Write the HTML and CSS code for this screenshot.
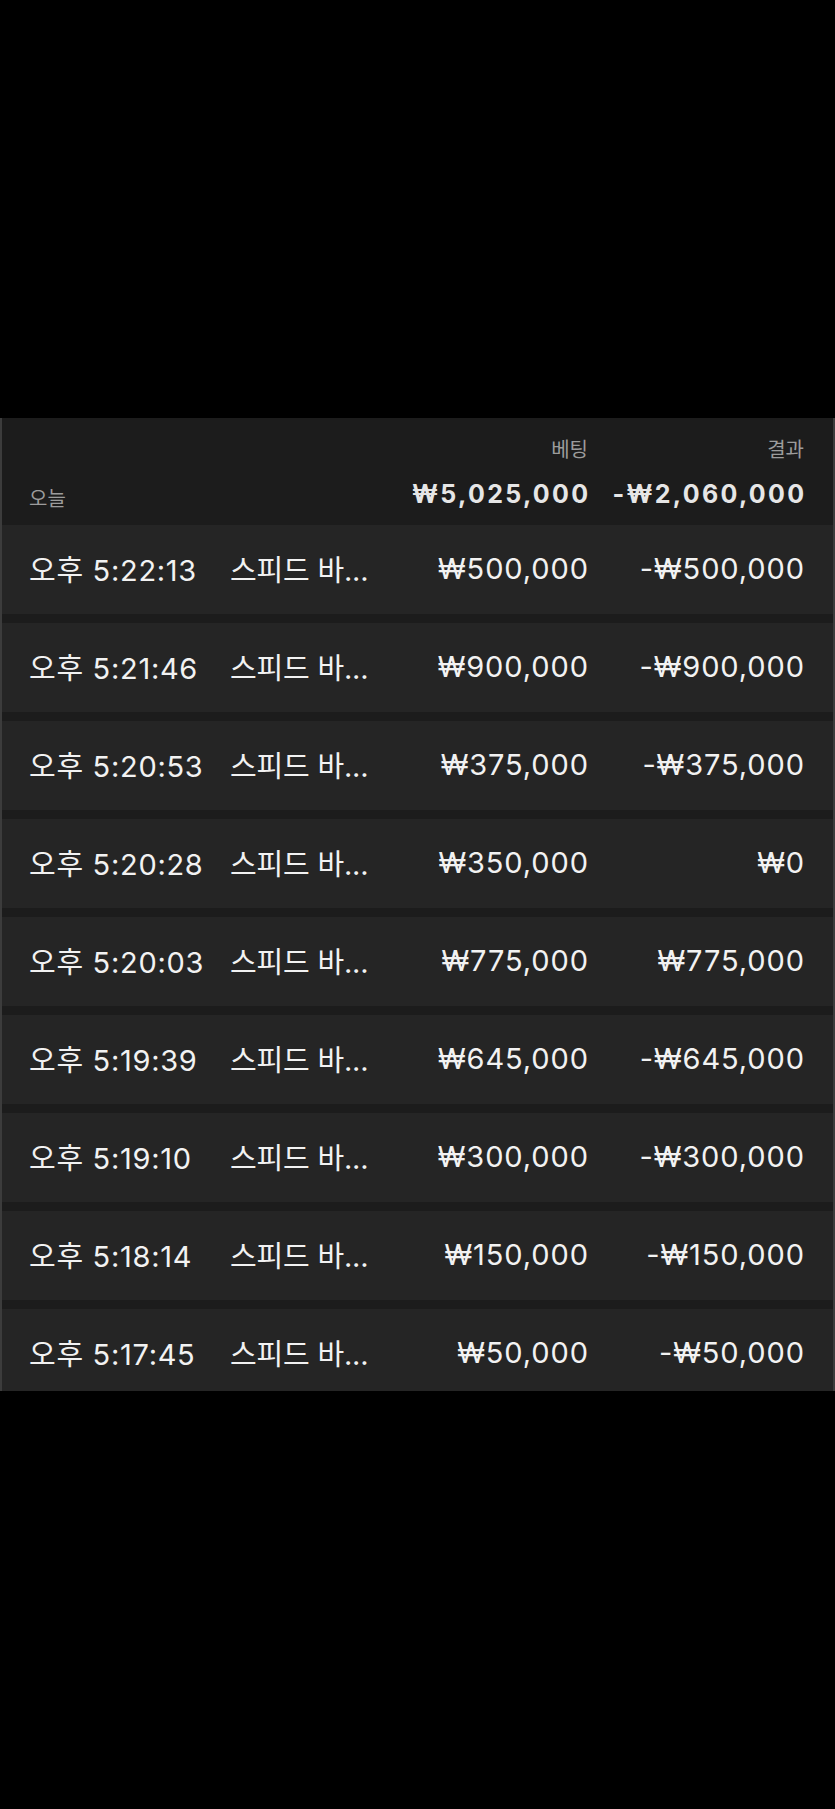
FILE: index.html
```html
<!DOCTYPE html>
<html lang="ko">
<head>
    <meta charset="UTF-8">
    <meta name="viewport" content="width=device-width, initial-scale=1.0">
    <title>베팅 내역</title>
    <link rel="stylesheet" href="styles.css">
</head>
<body>

    <div class="history-panel">
        <div class="history-header">
            <span class="label-bet">베팅</span>
            <span class="label-result">결과</span>
            <span class="day">오늘</span>
            <span class="total-bet">₩5,025,000</span>
            <span class="total-result">-₩2,060,000</span>
        </div>

        <div class="history-list">
            <div class="history-row">
                <span class="time">오후 5:22:13</span>
                <span class="game">스피드 바...</span>
                <span class="bet">₩500,000</span>
                <span class="result">-₩500,000</span>
            </div>
            <div class="history-row">
                <span class="time">오후 5:21:46</span>
                <span class="game">스피드 바...</span>
                <span class="bet">₩900,000</span>
                <span class="result">-₩900,000</span>
            </div>
            <div class="history-row">
                <span class="time">오후 5:20:53</span>
                <span class="game">스피드 바...</span>
                <span class="bet">₩375,000</span>
                <span class="result">-₩375,000</span>
            </div>
            <div class="history-row">
                <span class="time">오후 5:20:28</span>
                <span class="game">스피드 바...</span>
                <span class="bet">₩350,000</span>
                <span class="result">₩0</span>
            </div>
            <div class="history-row">
                <span class="time">오후 5:20:03</span>
                <span class="game">스피드 바...</span>
                <span class="bet">₩775,000</span>
                <span class="result">₩775,000</span>
            </div>
            <div class="history-row">
                <span class="time">오후 5:19:39</span>
                <span class="game">스피드 바...</span>
                <span class="bet">₩645,000</span>
                <span class="result">-₩645,000</span>
            </div>
            <div class="history-row">
                <span class="time">오후 5:19:10</span>
                <span class="game">스피드 바...</span>
                <span class="bet">₩300,000</span>
                <span class="result">-₩300,000</span>
            </div>
            <div class="history-row">
                <span class="time">오후 5:18:14</span>
                <span class="game">스피드 바...</span>
                <span class="bet">₩150,000</span>
                <span class="result">-₩150,000</span>
            </div>
            <div class="history-row">
                <span class="time">오후 5:17:45</span>
                <span class="game">스피드 바...</span>
                <span class="bet">₩50,000</span>
                <span class="result">-₩50,000</span>
            </div>
        </div>
    </div>

</body>
</html>
```

FILE: styles.css
```css
* {
    margin: 0;
    padding: 0;
    box-sizing: border-box;
}

body {
    font-family: Inter, "Noto Sans CJK KR", sans-serif;
    background: #000;
    color: #f2f2f2;
    padding-top: 418px;
    min-height: 100vh;
}

.history-panel {
    height: 973px;
    overflow: hidden;
    background-color: #1c1c1c;
    border-left: 2px solid #3c3c3c;
    border-right: 2px solid #3c3c3c;
}

.history-header,
.history-row {
    display: grid;
    grid-template-columns: 201px 158px 200px 216px;
    padding: 0 29px 0 27px;
}

.history-header {
    height: 107px;
    grid-template-rows: 46px 45px;
    padding-top: 7px;
    align-items: center;
}

.label-bet,
.label-result,
.day {
    font-size: 20px;
    color: #9c9c9c;
}

.label-bet {
    grid-column: 3;
    grid-row: 1;
    text-align: right;
}

.label-result {
    grid-column: 4;
    grid-row: 1;
    text-align: right;
}

.day {
    grid-column: 1;
    grid-row: 2;
    padding-top: 8px;
}

.total-bet,
.total-result {
    grid-row: 2;
    font-size: 25px;
    font-weight: 700;
    letter-spacing: 2.3px;
    text-align: right;
    color: #e6e6e6;
    margin-right: -2.3px;
}

.total-bet {
    grid-column: 3;
}

.total-result {
    grid-column: 4;
}

.history-list {
    display: flex;
    flex-direction: column;
    gap: 9px;
}

.history-row {
    height: 89px;
    padding-bottom: 3px;
    align-items: center;
    background-color: #252525;
    font-size: 29px;
    letter-spacing: 0.7px;
}

.history-row .time,
.history-row .game {
    white-space: nowrap;
}

.history-row .game {
    letter-spacing: -0.2px;
}

.history-row .bet,
.history-row .result {
    text-align: right;
    letter-spacing: 0.9px;
    margin-right: -0.9px;
}
```
